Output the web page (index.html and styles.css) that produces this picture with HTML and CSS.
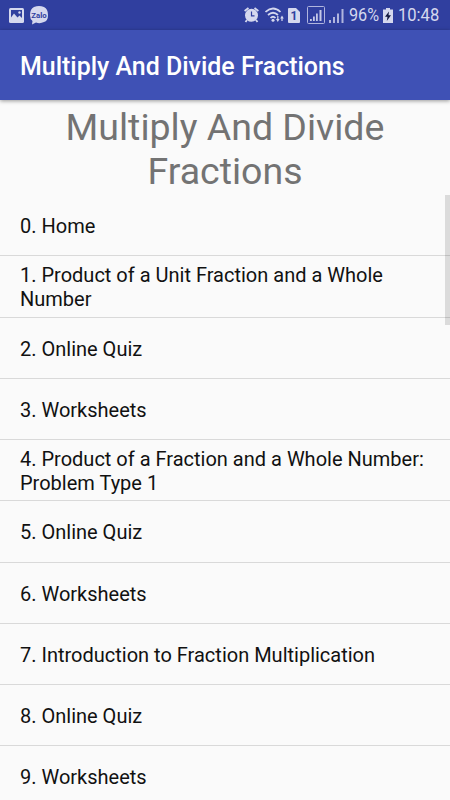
FILE: index.html
```
<!DOCTYPE html>
<html lang="en">
<head>
    <meta charset="UTF-8">
    <meta name="viewport" content="width=device-width, initial-scale=1.0">
    <title>Multiply And Divide Fractions</title>
    <link rel="stylesheet" href="styles.css">
</head>
<body>
    <div class="status-bar">
        <svg class="icon-picture" width="15" height="15" viewBox="0 0 15 15">
            <rect width="15" height="15" rx="1.5" fill="#d5d8ee"/>
            <path d="M2 2h11v10H2z" fill="#303f9f"/>
            <path d="M2 9.500l3-4 3.500 4 2-2L13 10v2.500H2z" fill="#d5d8ee"/>
            <circle cx="10.500" cy="4.500" r="1.200" fill="#d5d8ee"/>
        </svg>
        <svg class="icon-zalo" width="18" height="19" viewBox="0 0 18 19">
            <path d="M4 1Q9-1 14 1Q18 3 18 9T14 16Q10 18 6 16.500L2 18.500L2.500 15Q0 13 0 9Q0 3 4 1z" fill="#d5d8ee"/>
            <text x="9" y="11.500" class="zalo-text">Zalo</text>
        </svg>
        <div class="status-right">
            <svg class="icon-alarm" width="15" height="16" viewBox="0 0 15 16">
                <path d="M.6 4L4.500 1M14.400 4L10.500 1M3 13l-1.500 2M12 13l1.500 2" stroke="#d5d8ee" stroke-width="1.800"/>
                <circle cx="7.500" cy="8.300" r="6.500" fill="#d5d8ee"/>
                <path d="M7.500 4.500V8.800H10.500" stroke="#303f9f" stroke-width="1.200" fill="none"/>
            </svg>
            <svg class="icon-wifi" width="20" height="16" viewBox="0 0 20 16">
                <g fill="none" stroke="#d5d8ee" stroke-width="1.700">
                    <path d="M.5 5Q8-2 15.500 5"/>
                    <path d="M3 8Q8 3.500 13 8"/>
                    <path d="M5.500 11Q8 8.500 10.500 11"/>
                </g>
                <circle cx="8" cy="13.300" r="1.500" fill="#d5d8ee"/>
                <path d="M11 12h1.200V9h1.200v3h1.200L12.800 15zM15.200 11.500L17 8.500l1.800 3h-1.200V14h-1.200v-2.500z" fill="#d5d8ee"/>
            </svg>
            <svg class="icon-sim" width="12" height="15" viewBox="0 0 12 15">
                <path d="M0 1q0-1 1-1h7l4 4v10q0 1-1 1H1q-1 0-1-1z" fill="#d5d8ee"/>
                <text x="6" y="11.800" class="sim-text">1</text>
            </svg>
            <svg class="icon-signal-box" width="18" height="18" viewBox="0 0 18 18">
                <rect x=".5" y=".5" width="17" height="17" rx="1" fill="none" stroke="#b0b5de"/>
                <path d="M3 13h1.800v2H3zM6 10.500h1.800V15H6zM9 7.500h1.800V15H9zM12.500 4h2v11h-2z" fill="#c5c9e7"/>
            </svg>
            <svg class="icon-signal" width="15" height="14" viewBox="0 0 15 14">
                <path d="M0 11h2v3H0zM4 8h2v6H4zM8 4.500h2V14H8zM12.500 0h2v14h-2z" fill="#b0b5de"/>
            </svg>
            <span class="battery-level">96%</span>
            <svg class="icon-battery" width="10" height="15" viewBox="0 0 10 15">
                <path d="M3 0h4v1.500h3V15H0V1.500h3z" fill="#d5d8ee"/>
                <path d="M6 3.500L2 8.800h2.500L3.800 13 8 7.300H5.500z" fill="#10163c"/>
            </svg>
            <span class="clock">10:48</span>
        </div>
    </div>

    <header>
        <h1>Multiply And Divide Fractions</h1>
    </header>

    <main>
        <h2>Multiply And Divide<br>Fractions</h2>
        <ul class="lesson-list">
            <li>0. Home</li>
            <li>1. Product of a Unit Fraction and a Whole Number</li>
            <li>2. Online Quiz</li>
            <li>3. Worksheets</li>
            <li>4. Product of a Fraction and a Whole Number: Problem Type 1</li>
            <li>5. Online Quiz</li>
            <li>6. Worksheets</li>
            <li>7. Introduction to Fraction Multiplication</li>
            <li>8. Online Quiz</li>
            <li>9. Worksheets</li>
        </ul>
        <div class="scroll-thumb"></div>
    </main>
</body>
</html>
```

FILE: styles.css
```
* {
    margin: 0;
    padding: 0;
    box-sizing: border-box;
}
body {
    height: 800px;
    overflow: hidden;
    background: #fafafa;
    font-family: Roboto, sans-serif;
}
svg {
    display: block;
    flex: none;
}
.status-bar {
    display: flex;
    align-items: center;
    height: 30px;
    padding: 0 10px 0 9px;
    background: #303f9f;
    color: #d5d8ee;
}
.icon-zalo {
    margin-left: 6px;
}
.zalo-text {
    font-size: 7.8px;
    font-weight: 700;
    text-anchor: middle;
    fill: #303f9f;
}
.sim-text {
    font-size: 12px;
    font-weight: 700;
    text-anchor: middle;
    fill: #303f9f;
}
.status-right {
    display: flex;
    align-items: center;
    margin-left: auto;
}
.icon-wifi {
    margin-left: 6px;
}
.icon-sim {
    margin-left: 3px;
}
.icon-signal-box {
    margin-left: 7px;
}
.icon-signal {
    margin-top: 1px;
    margin-left: 4px;
}
.battery-level,
.clock {
    font-size: 18px;
    line-height: 30px;
    white-space: nowrap;
    transform: scaleX(0.9);
    transform-origin: left;
}
.battery-level {
    width: 30px;
    margin-left: 5px;
}
.icon-battery {
    margin-left: 4px;
}
.clock {
    width: 42px;
    margin-left: 5px;
}
.clock {
    transform: scaleX(0.92);
}
header {
    position: relative;
    display: flex;
    align-items: center;
    height: 70px;
    padding: 3px 20px 0;
    background: #3f51b5;
    color: white;
    box-shadow: 0 1px 4px rgba(0, 0, 0, 0.4);
}
h1 {
    font-size: 24.95px;
    font-weight: 500;
}
main {
    position: relative;
    height: 700px;
}
h2 {
    height: 95px;
    padding-top: 5px;
    color: #737373;
    font-size: 37.5px;
    font-weight: 400;
    line-height: 44px;
    text-align: center;
}
.lesson-list {
    list-style: none;
}
.lesson-list li {
    display: flex;
    align-items: center;
    height: 61.25px;
    padding: 2px 20px 0;
    border-bottom: 1px solid #d9d9d9;
    color: #111;
    font-size: 20px;
    line-height: 24px;
}
.scroll-thumb {
    position: absolute;
    top: 95px;
    right: 0;
    width: 5px;
    height: 130px;
    background: rgba(0, 0, 0, 0.12);
}
```
